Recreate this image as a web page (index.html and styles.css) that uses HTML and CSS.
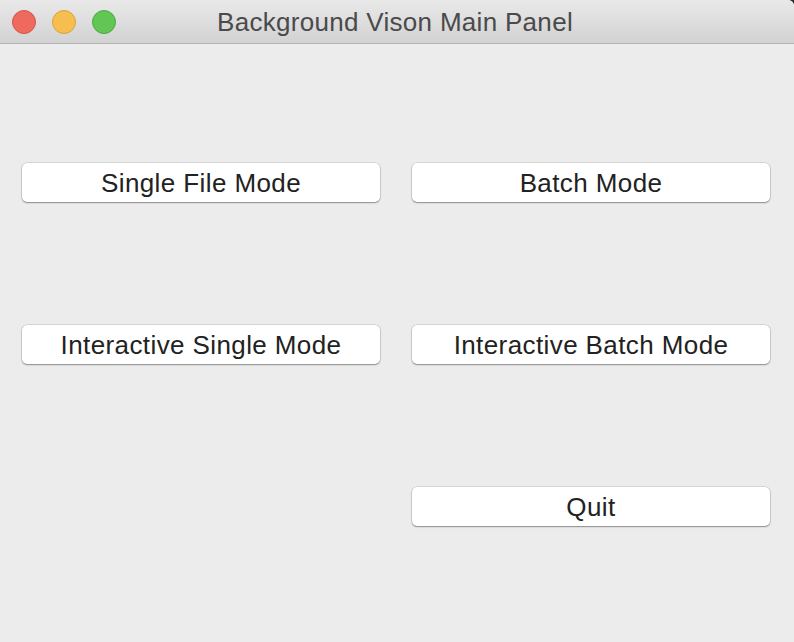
FILE: index.html
```html
<!DOCTYPE html>
<html>
<head>
<meta charset="utf-8">
<link rel="stylesheet" href="styles.css">
</head>
<body>
<div class="window">
  <div class="titlebar">
    <div class="lights">
      <span class="light red"></span>
      <span class="light yellow"></span>
      <span class="light green"></span>
    </div>
    <div class="title">Background Vison Main Panel</div>
  </div>
  <div class="content">
    <button class="btn">Single File Mode</button>
    <button class="btn">Batch Mode</button>
    <button class="btn">Interactive Single Mode</button>
    <button class="btn">Interactive Batch Mode</button>
    <span class="spacer"></span>
    <button class="btn">Quit</button>
  </div>
</div>
</body>
</html>
```

FILE: styles.css
```css
html, body {
  margin: 0;
  padding: 0;
  background: #2b2b2b;
}
.window {
  width: 794px;
  height: 642px;
  background: #ececec;
  border-top-right-radius: 6px;
  overflow: hidden;
  font-family: "Liberation Sans", Arial, sans-serif;
}
.titlebar {
  position: relative;
  height: 43px;
  background: linear-gradient(#e9e9e9, #d2d2d2);
  border-bottom: 1px solid #b4b4b4;
  display: flex;
  align-items: center;
  justify-content: center;
}
.lights {
  position: absolute;
  left: 12px;
  top: 10px;
  display: flex;
  gap: 16px;
}
.light {
  width: 24px;
  height: 24px;
  border-radius: 50%;
  box-sizing: border-box;
}
.red { background: #ee6a5f; border: 1px solid #d65448; }
.yellow { background: #f6be4f; border: 1px solid #dba23c; }
.green { background: #62c655; border: 1px solid #4ea943; }
.title {
  font-size: 26px;
  letter-spacing: 0.3px;
  color: #4a4a4a;
  margin: 1px 4px 0 0;
}
.content {
  display: grid;
  grid-template-columns: 358px 358px;
  column-gap: 32px;
  row-gap: 123px;
  padding: 119px 0 0 22px;
}
.btn {
  height: 39px;
  background: #ffffff;
  border: none;
  border-radius: 5px;
  box-shadow: 0 0 0 0.5px rgba(0,0,0,0.18), 0 1px 1.5px rgba(0,0,0,0.35);
  font-family: "Liberation Sans", Arial, sans-serif;
  font-size: 26px;
  letter-spacing: 0.4px;
  color: #222222;
  padding: 2px 0 0 0;
}
```
